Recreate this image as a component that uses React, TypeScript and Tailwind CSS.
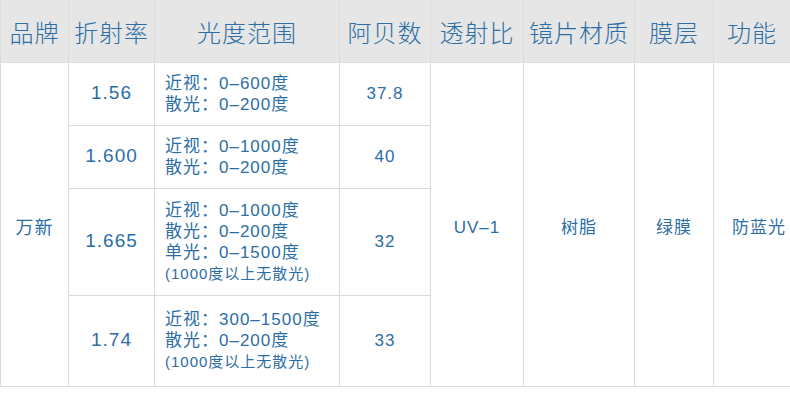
import React from 'react';

const font = { fontFamily: '"Liberation Sans", "Noto Sans CJK SC", sans-serif' };

const headers = ['品牌', '折射率', '光度范围', '阿贝数', '透射比', '镜片材质', '膜层', '功能'];
const widths = ['w-[68px]', 'w-[86px]', 'w-[185px]', 'w-[91px]', 'w-[93px]', 'w-[111px]', 'w-[79px]', 'w-[77px]'];

type Row = { index: string; lines: string[]; note?: string; abbe: string; h: string };

const rows: Row[] = [
  { index: '1.56', lines: ['近视：0–600度', '散光：0–200度'], abbe: '37.8', h: 'h-[63px]' },
  { index: '1.600', lines: ['近视：0–1000度', '散光：0–200度'], abbe: '40', h: 'h-[63px]' },
  { index: '1.665', lines: ['近视：0–1000度', '散光：0–200度', '单光：0–1500度'], note: '(1000度以上无散光)', abbe: '32', h: 'h-[107px]' },
  { index: '1.74', lines: ['近视：300–1500度', '散光：0–200度'], note: '(1000度以上无散光)', abbe: '33', h: 'h-[91px]' },
];

const cell = 'border border-[#dadada] text-center align-middle';

export default function App() {
  return (
    <div className="w-[790px] h-[404px] bg-white text-[#2c6ea5] overflow-hidden" style={font}>
      <table className="w-[790px] table-fixed border-collapse">
        <colgroup>
          {widths.map((w, i) => (
            <col key={i} className={w} />
          ))}
        </colgroup>
        <thead>
          <tr className="h-[62px] bg-[#e6e6e6]">
            {headers.map((h) => (
              <th key={h} className="border-x border-b border-[#dcdcdc] text-[24px] font-light tracking-[1px] text-center align-middle pt-[7px]">
                {h}
              </th>
            ))}
          </tr>
        </thead>
        <tbody>
          {rows.map((r, i) => (
            <tr key={r.index} className={r.h}>
              {i === 0 && (
                <td rowSpan={4} className={`${cell} text-[18px] tracking-[1px] pt-[8px]`}>
                  万新
                </td>
              )}
              <td className={`${cell} text-[19px] tracking-[1px]`}>{r.index}</td>
              <td className="border border-[#dadada] align-middle pl-[10px] text-left">
                {r.lines.map((l) => (
                  <div key={l} className="text-[17px] leading-[21px] tracking-[1px]">
                    {l}
                  </div>
                ))}
                {r.note && <div className="text-[15px] leading-[21px] tracking-[1px]">{r.note}</div>}
              </td>
              <td className={`${cell} text-[17px] tracking-[1px]`}>{r.abbe}</td>
              {i === 0 && (
                <>
                  <td rowSpan={4} className={`${cell} text-[17px] tracking-[1px] pt-[8px]`}>UV–1</td>
                  <td rowSpan={4} className={`${cell} text-[17px] tracking-[1px] pt-[8px]`}>树脂</td>
                  <td rowSpan={4} className={`${cell} text-[17px] tracking-[1px] pt-[8px]`}>绿膜</td>
                  <td rowSpan={4} className={`${cell} text-[17px] tracking-[1px] pt-[8px] pl-[14px]`}>防蓝光</td>
                </>
              )}
            </tr>
          ))}
        </tbody>
      </table>
    </div>
  );
}
